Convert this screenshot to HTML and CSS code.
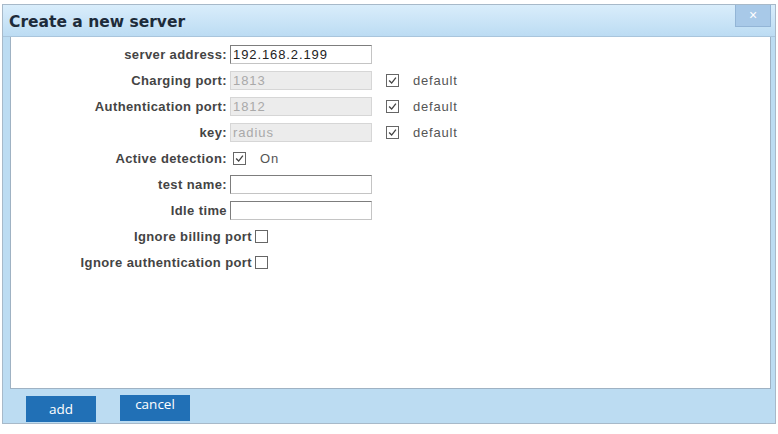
FILE: index.html
```html
<!DOCTYPE html>
<html lang="en">

<head>
    <meta charset="UTF-8">
    <title>Create a new server</title>
    <link rel="stylesheet" href="styles.css">
</head>

<body>
    <div class="dialog">
        <header class="dialog-head">
            <h1>Create a new server</h1>
            <span class="close">&times;</span>
        </header>
        <main class="dialog-body">
            <div class="row">
                <label>server address:</label>
                <input type="text" value="192.168.2.199">
            </div>
            <div class="row">
                <label>Charging port:</label>
                <input type="text" value="1813" disabled>
                <span class="check on"><svg viewBox="0 0 13 13"><path d="M2.5 6.5 L5.5 9.5 L10.5 3"/></svg></span>
                <span class="note">default</span>
            </div>
            <div class="row">
                <label>Authentication port:</label>
                <input type="text" value="1812" disabled>
                <span class="check on"><svg viewBox="0 0 13 13"><path d="M2.5 6.5 L5.5 9.5 L10.5 3"/></svg></span>
                <span class="note">default</span>
            </div>
            <div class="row">
                <label>key:</label>
                <input type="text" value="radius" disabled>
                <span class="check on"><svg viewBox="0 0 13 13"><path d="M2.5 6.5 L5.5 9.5 L10.5 3"/></svg></span>
                <span class="note">default</span>
            </div>
            <div class="row">
                <label>Active detection:</label>
                <span class="check on first"><svg viewBox="0 0 13 13"><path d="M2.5 6.5 L5.5 9.5 L10.5 3"/></svg></span>
                <span class="note">On</span>
            </div>
            <div class="row">
                <label>test name:</label>
                <input type="text">
            </div>
            <div class="row">
                <label>Idle time</label>
                <input type="text">
            </div>
            <div class="row">
                <label class="wide">Ignore billing port</label>
                <span class="check"></span>
            </div>
            <div class="row">
                <label class="wide">Ignore authentication port</label>
                <span class="check"></span>
            </div>
        </main>
        <footer class="dialog-foot">
            <button class="btn">add</button>
            <button class="btn btn-cancel"><span>cancel</span><span class="spill">edit</span></button>
        </footer>
    </div>
</body>

</html>
```

FILE: styles.css
```css
* {
    box-sizing: border-box;
    margin: 0;
    padding: 0;
}

body {
    background: #fff;
    font-family: "Liberation Sans", Arial, sans-serif;
}

.dialog {
    margin: 4px 0 0 2px;
    width: 774px;
    height: 420px;
    border: 1px solid #a7b9c9;
    background: #bcdcf2;
    display: flex;
    flex-direction: column;
}

.dialog-head {
    height: 32px;
    display: flex;
    justify-content: space-between;
    background: linear-gradient(#d9edfb, #bcdcf3);
    border-bottom: 1px solid #a9c5dc;
}

.dialog-head h1 {
    font-family: "DejaVu Sans", Verdana, sans-serif;
    font-size: 15.5px;
    font-weight: bold;
    color: #1d2b3a;
    padding: 8px 0 0 6px;
}

.close {
    width: 36px;
    height: 22px;
    margin-right: 4px;
    background: #a8c9e8;
    border: 1px solid #93b5d6;
    border-top: none;
    color: #fff;
    font-size: 14px;
    line-height: 20px;
    text-align: center;
}

.dialog-body {
    height: 352px;
    margin: 0 4px 0 7px;
    background: #fff;
    border: 1px solid #9fb2c3;
    border-top: none;
    padding-top: 4px;
}

.row {
    height: 26px;
    display: flex;
    align-items: center;
}

.row label {
    width: 216px;
    margin-right: 3px;
    text-align: right;
    font-size: 13px;
    letter-spacing: 0.4px;
    font-weight: bold;
    color: #444;
}

.row label.wide {
    width: 241px;
}

.row input {
    width: 142px;
    height: 19px;
    border: 1px solid #7d7d7d;
    border-right-color: #c4c4c4;
    border-bottom-color: #c4c4c4;
    padding: 0 2px;
    font-family: "Liberation Sans", Arial, sans-serif;
    font-size: 13px;
    letter-spacing: 0.9px;
    color: #222;
    background: #fff;
}

.row input:disabled {
    background: #ececec;
    border: 1px solid #d6d6d6;
    color: #a9a9a9;
}

.check {
    width: 13px;
    height: 13px;
    border: 1px solid #666;
    background: #fff;
    margin-left: 14px;
}

.check.first {
    margin-left: 3px;
}

.row label.wide + .check {
    margin-left: 0;
}

.check svg {
    display: block;
    width: 11px;
    height: 11px;
    fill: none;
    stroke: #444;
    stroke-width: 1.6;
}

.note {
    margin-left: 14px;
    font-size: 13px;
    letter-spacing: 0.8px;
    color: #555;
}

.dialog-foot {
    flex: 1;
    display: flex;
    align-items: flex-start;
    gap: 24px;
    padding: 7px 0 0 23px;
}

.btn {
    width: 70px;
    height: 26px;
    border: none;
    background: #2170b6;
    color: #fff;
    font-family: "Open Sans", sans-serif;
    font-size: 13.5px;
}

.btn-cancel {
    margin-top: -1px;
    display: flex;
    flex-direction: column;
    align-items: center;
    justify-content: flex-start;
    line-height: 18px;
}

.btn-cancel .spill {
    margin-top: 10px;
    color: #e8f3fb;
}
```
